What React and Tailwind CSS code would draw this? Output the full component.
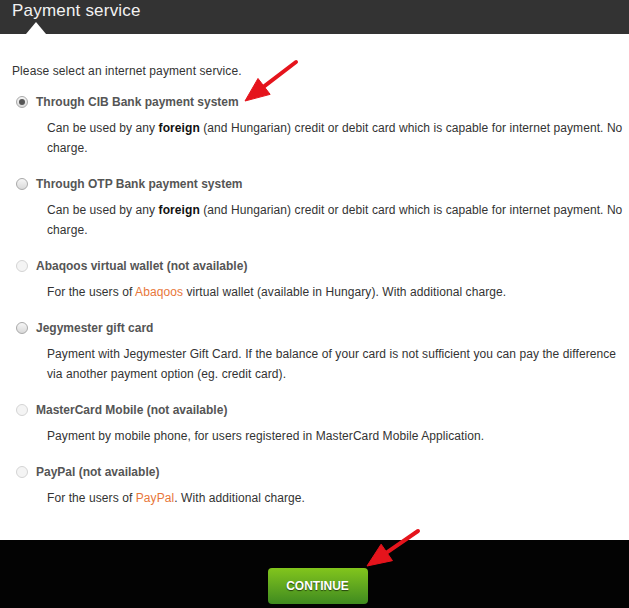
import React, { useState } from 'react';

const options = [
    {
        id: 'cib',
        label: 'Through CIB Bank payment system',
        desc: (
            <>Can be used by any <b className="text-[#111]">foreign</b> (and Hungarian) credit or debit card which is capable for internet payment. No charge.</>
        ),
    },
    {
        id: 'otp',
        label: 'Through OTP Bank payment system',
        desc: (
            <>Can be used by any <b className="text-[#111]">foreign</b> (and Hungarian) credit or debit card which is capable for internet payment. No charge.</>
        ),
    },
    {
        id: 'abaqoos',
        label: 'Abaqoos virtual wallet (not available)',
        disabled: true,
        desc: (
            <>For the users of <a className="text-[#e8773a]">Abaqoos</a> virtual wallet (available in Hungary). With additional charge.</>
        ),
    },
    {
        id: 'jegymester',
        label: 'Jegymester gift card',
        desc: 'Payment with Jegymester Gift Card. If the balance of your card is not sufficient you can pay the difference via another payment option (eg. credit card).',
    },
    {
        id: 'mastercard',
        label: 'MasterCard Mobile (not available)',
        disabled: true,
        desc: 'Payment by mobile phone, for users registered in MasterCard Mobile Application.',
    },
    {
        id: 'paypal',
        label: 'PayPal (not available)',
        disabled: true,
        desc: (
            <>For the users of <a className="text-[#e8773a]">PayPal</a>. With additional charge.</>
        ),
    },
];

const Radio = ({ checked, disabled }) => (
    <span
        className={`flex items-center justify-center w-[12px] h-[12px] rounded-full border ${
            disabled ? 'border-[#d4d4d4] bg-[#f4f4f4]' : 'border-[#a9a9a9] bg-gradient-to-b from-[#f6f6f6] to-[#d9d9d9]'
        }`}
    >
        {checked && <span className="w-[6px] h-[6px] rounded-full bg-[#555]" />}
    </span>
);

// red pointer arrow, drawn from tail to tip
const Arrow = ({ x1, y1, x2, y2 }) => {
    const dx = x2 - x1;
    const dy = y2 - y1;
    const len = Math.sqrt(dx * dx + dy * dy);
    const ux = dx / len;
    const uy = dy / len;
    const headLen = 24;
    const headW = 10;
    const bx = x2 - ux * headLen;
    const by = y2 - uy * headLen;
    const px = -uy * headW;
    const py = ux * headW;
    return (
        <g fill="#e5141c" stroke="#e5141c">
            <line x1={x1} y1={y1} x2={bx + ux * 2} y2={by + uy * 2} strokeWidth="4" strokeLinecap="round" />
            <polygon points={`${x2},${y2} ${bx + px},${by + py} ${bx - px},${by - py}`} strokeWidth="1" strokeLinejoin="round" />
        </g>
    );
};

export default function App() {
    const [selected, setSelected] = useState('cib');

    return (
        <div className="relative w-[629px] h-[608px] bg-white font-['Liberation_Sans',Arial,sans-serif] overflow-hidden">
            <div className="relative h-[34px] bg-[#333333] px-[12px]">
                <h1 className="text-[17px] leading-[22px] text-[#f2f2f2] tracking-[0.2px]">Payment service</h1>
                <span className="absolute left-[26px] bottom-0 w-0 h-0 border-l-[10px] border-r-[10px] border-b-[12px] border-l-transparent border-r-transparent border-b-white" />
            </div>

            <div className="pl-[12px] pt-[27px] h-[506px]">
                <p className="text-[12px] leading-[20px] text-[#333] tracking-[0.1px]">Please select an internet payment service.</p>
                <div className="mt-[11px] flex flex-col gap-[16px]">
                    {options.map((opt) => (
                        <div key={opt.id}>
                            <label
                                className="flex items-center h-[20px] cursor-pointer"
                                onClick={() => !opt.disabled && setSelected(opt.id)}
                            >
                                <span className="pl-[4px] w-[24px]">
                                    <Radio checked={selected === opt.id} disabled={opt.disabled} />
                                </span>
                                <span className="text-[12px] font-bold text-[#555]">{opt.label}</span>
                            </label>
                            <p className="mt-[6px] pl-[35px] text-[12px] leading-[20px] text-[#333] tracking-[0.08px]">{opt.desc}</p>
                        </div>
                    ))}
                </div>
            </div>

            <div className="h-[68px] bg-[#030303] flex justify-center pt-[28px] pl-[6px]">
                <button className="w-[100px] h-[36px] rounded-[4px] bg-gradient-to-b from-[#82c51c] to-[#3f8b1f] text-white text-[12px] font-bold [text-shadow:0_1px_1px_rgba(0,0,0,0.6)]">
                    CONTINUE
                </button>
            </div>

            <svg className="absolute inset-0 pointer-events-none" width="629" height="608">
                <Arrow x1={296} y1={62} x2={245} y2={101} />
                <Arrow x1={418} y1={531} x2={367} y2={566} />
            </svg>
        </div>
    );
}
